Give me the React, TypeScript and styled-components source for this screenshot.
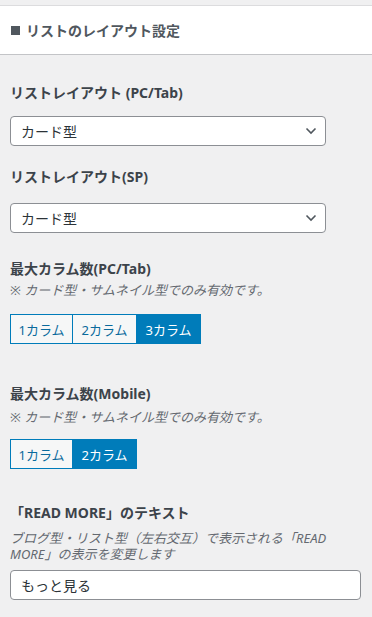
import React from "react";
import styled, { createGlobalStyle } from "styled-components";

const Global = createGlobalStyle`
  html, body { margin: 0; padding: 0; background: #f0f0f1; }
  body { font-family: "Noto Sans", "Noto Sans CJK JP", sans-serif; }
  * { box-sizing: border-box; }
`;

const Panel = styled.div`
  width: 372px;
  min-height: 617px;
  background: #f0f0f1;
  padding-top: 5px;
`;

const Header = styled.div`
  background: #fff;
  border-top: 1px solid #dcdcde;
  border-bottom: 1px solid #c3c4c7;
  height: 50px;
  display: flex;
  align-items: center;
  padding-left: 11px;
  gap: 6px;
  font-size: 14px;
  font-weight: 700;
  color: #50575e;
`;

const Square = styled.span`
  width: 9px;
  height: 9px;
  background: #50575e;
  display: inline-block;
`;

const Body = styled.div`
  padding: 28px 11px 0 10px;
  display: flex;
  flex-direction: column;
`;

const Section = styled.div<{ $gap: number }>`
  display: flex;
  flex-direction: column;
  margin-bottom: ${(p) => p.$gap}px;
`;

const Label = styled.div`
  font-size: 14px;
  font-weight: 700;
  line-height: 20px;
  color: #3c434a;
`;

const Desc = styled.div<{ $mt: number }>`
  font-size: 13px;
  font-style: italic;
  line-height: 16px;
  color: #646970;
  margin-top: ${(p) => p.$mt}px;
`;

const SelectBox = styled.div<{ $mt: number }>`
  margin-top: ${(p) => p.$mt}px;
  width: 316px;
  height: 30px;
  background: #fff;
  border: 1px solid #8c8f94;
  border-radius: 4px;
  display: flex;
  align-items: center;
  justify-content: space-between;
  padding: 0 8px 0 10px;
  font-size: 14px;
  color: #2c3338;
`;

const ButtonGroup = styled.div<{ $mt: number }>`
  margin-top: ${(p) => p.$mt}px;
  display: flex;
`;

const ColButton = styled.div<{ $active?: boolean; $first?: boolean }>`
  width: ${(p) => (p.$first ? 63 : 64)}px;
  height: 30px;
  display: flex;
  align-items: center;
  justify-content: center;
  font-size: 13px;
  border: 1px solid #007cba;
  border-left-width: ${(p) => (p.$first ? 1 : 0)}px;
  background: ${(p) => (p.$active ? "#007cba" : "#f6f7f7")};
  color: ${(p) => (p.$active ? "#fff" : "#0a6a9c")};
`;

const TextInput = styled.div`
  margin-top: 8px;
  width: 351px;
  height: 30px;
  background: #fff;
  border: 1px solid #8c8f94;
  border-radius: 4px;
  display: flex;
  align-items: center;
  padding: 0 10px;
  font-size: 14px;
  color: #2c3338;
`;

const Chevron = () => (
  <svg width="12" height="8" viewBox="0 0 12 8">
    <path d="M1.5 1.5 L6 6 L10.5 1.5" fill="none" stroke="#50575e" strokeWidth="1.6" />
  </svg>
);

const Select = ({ value, mt }: { value: string; mt: number }) => (
  <SelectBox $mt={mt}>
    <span>{value}</span>
    <Chevron />
  </SelectBox>
);

const Columns = ({ count, active, mt }: { count: number; active: number; mt: number }) => (
  <ButtonGroup $mt={mt}>
    {Array.from({ length: count }, (_, i) => (
      <ColButton key={i} $first={i === 0} $active={i + 1 === active}>
        {i + 1}カラム
      </ColButton>
    ))}
  </ButtonGroup>
);

export default function App() {
  return (
    <>
      <Global />
      <Panel>
        <Header>
          <Square />
          <span>リストのレイアウト設定</span>
        </Header>
        <Body>
          <Section $gap={21}>
            <Label>リストレイアウト (PC/Tab)</Label>
            <Select value="カード型" mt={13} />
          </Section>
          <Section $gap={26}>
            <Label>リストレイアウト(SP)</Label>
            <Select value="カード型" mt={16} />
          </Section>
          <Section $gap={40}>
            <Label>最大カラム数(PC/Tab)</Label>
            <Desc $mt={3}>※ カード型・サムネイル型でのみ有効です。</Desc>
            <Columns count={3} active={3} mt={16} />
          </Section>
          <Section $gap={34}>
            <Label>最大カラム数(Mobile)</Label>
            <Desc $mt={5}>※ カード型・サムネイル型でのみ有効です。</Desc>
            <Columns count={2} active={2} mt={14} />
          </Section>
          <Section $gap={0}>
            <Label>「READ MORE」のテキスト</Label>
            <Desc $mt={7}>ブログ型・リスト型（左右交互）で表示される「READ MORE」の表示を変更します</Desc>
            <TextInput>もっと見る</TextInput>
          </Section>
        </Body>
      </Panel>
    </>
  );
}
